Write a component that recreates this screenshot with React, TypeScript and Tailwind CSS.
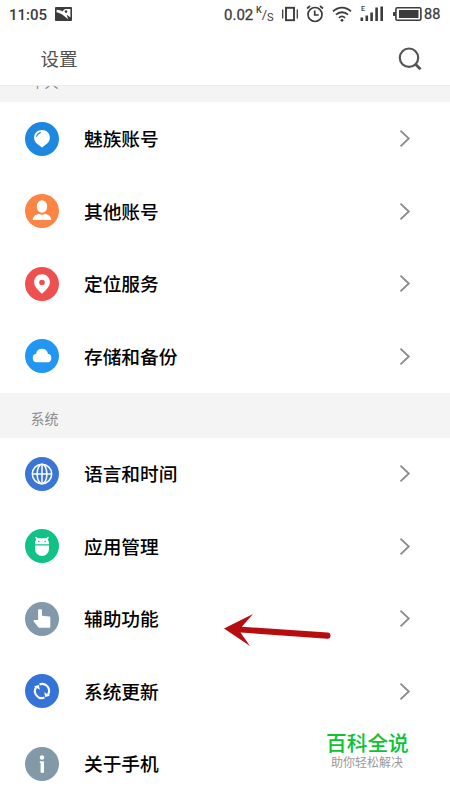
import React from 'react';

interface SettingItem {
  label: string;
  color: string;
  icon: React.ReactNode;
}

const accountItems: SettingItem[] = [
  {
    label: '魅族账号',
    color: 'bg-[#1e88e0]',
    icon: (
      <>
        <path d="M17 8c4.6 0 7.9 3.3 7.9 7.6 0 4-2.7 6.4-5.3 7.9L17 25.5l-2.6-2C11.8 22 9.1 19.6 9.1 15.6 9.1 11.3 12.4 8 17 8z" fill="#fff" />
        <path d="M11.5 14.3c.6-2 1.9-3.200 3.900-3.700" fill="none" stroke="#1e88e0" strokeWidth="1.1" strokeLinecap="round" />
      </>
    ),
  },
  {
    label: '其他账号',
    color: 'bg-[#fb8544]',
    icon: (
      <>
        <ellipse cx="17" cy="12.5" rx="5.2" ry="6.2" fill="#fff" />
        <path d="M7.8 26c0-3.600 2.200-4.900 6.200-6.200 1.800 1.200 4.200 1.200 6 0 4 1.300 6.200 2.600 6.200 6.200z" fill="#fff" />
      </>
    ),
  },
  {
    label: '定位服务',
    color: 'bg-[#ee5050]',
    icon: (
      <path
        fillRule="evenodd"
        d="M17 7.2c4.5 0 7.9 3.4 7.9 7.8 0 4.8-4.4 8.5-7.9 11.7C13.5 23.5 9.1 19.8 9.1 15c0-4.4 3.4-7.8 7.9-7.8zm0 5.5a2.8 2.8 0 1 0 0 5.6 2.8 2.8 0 0 0 0-5.6z"
        fill="#fff"
      />
    ),
  },
  {
    label: '存储和备份',
    color: 'bg-[#2196f3]',
    icon: (
      <path d="M12 23.3a4.3 4.3 0 0 1-.9-8.5 6 6 0 0 1 11.8-.1 4.350 4.350 0 0 1-.9 8.600z" fill="#fff" />
    ),
  },
];

const systemItems: SettingItem[] = [
  {
    label: '语言和时间',
    color: 'bg-[#3b76d6]',
    icon: (
      <g fill="none" stroke="#fff" strokeWidth="1.5">
        <circle cx="17" cy="17" r="9.7" />
        <ellipse cx="17" cy="17" rx="4.9" ry="9.7" />
        <path d="M7.3 17h19.4M17 7.3v19.4" />
      </g>
    ),
  },
  {
    label: '应用管理',
    color: 'bg-[#10c285]',
    icon: (
      <>
        <path d="M10 15.2c0-2.1.5-3.6 1.3-4.7L10 8.2l1-.5 2 1.500h8l2-1.500 1 .5-1.300 2.300c.8 1.100 1.300 2.600 1.300 4.700z" fill="#fff" />
        <path d="M10 16.5h14v3.600a7 7 0 0 1-14 0z" fill="#fff" />
        <circle cx="13.8" cy="12.5" r="0.8" fill="#10c285" />
        <circle cx="20.2" cy="12.5" r="0.8" fill="#10c285" />
      </>
    ),
  },
  {
    label: '辅助功能',
    color: 'bg-[#8299ab]',
    icon: (
      <path d="M13.1 8.2c0-.6.4-1 1-1h1.900c.6 0 1 .4 1 1v5.600l7.500.7c.5.1.8.4.8.9v9.400c0 .6-.4 1-1 1H14.800c-.6 0-1-.2-1.400-.6l-4.700-5.800c-.3-.5-.1-1.200.5-1.300l3.900-.1z" fill="#fff" />
    ),
  },
  {
    label: '系统更新',
    color: 'bg-[#3474d9]',
    icon: (
      <>
        <path d="M14.5 10.4a7 7 0 0 1 8.500 10.200M19.500 23.600a7 7 0 0 1-8.500-10.200" fill="none" stroke="#fff" strokeWidth="2.1" />
        <path d="M9 12.200 13.800 11l1 4.800zM25 21.800 20.200 23l-1-4.800z" fill="#fff" />
      </>
    ),
  },
  {
    label: '关于手机',
    color: 'bg-[#8299a8]',
    icon: (
      <>
        <circle cx="17" cy="10.5" r="2.2" fill="#fff" />
        <path d="M14.8 14.300h4.200v11.400h-3.400v-9.600h-.8z" fill="#fff" />
      </>
    ),
  },
];

const StatusBar: React.FC = () => (
  <div className="flex h-7 items-center pl-[9px] font-['Roboto',sans-serif] text-[15px] font-medium leading-7 text-[#3c3c3c]">
    <span className="w-[46px] pt-px">11:05</span>
    <svg className="h-[14px] w-[17px]" viewBox="0 0 17 14">
      <rect width="17" height="14" rx="1" fill="#3c3c3c" />
      <path d="M1.600 2.800C4 3 6 3.400 7.600 4.500 8.500 2.600 10 2 11.500 2H15.400V10.500L11.500 7.500 13.200 12.300 8.500 8.500C6.500 6.500 4 6 1.600 5.200z" fill="#fff" />
      <circle cx="11" cy="4.600" r="1.300" fill="#3c3c3c" />
    </svg>
    <span className="ml-[152px] w-[32px] pt-px text-[15px] font-normal [-webkit-text-stroke:0.3px_#3c3c3c]">0.02</span>
    <span className="flex w-[17px] items-center leading-none">
      <span className="-mt-2 text-[9px]">K</span>
      <span className="text-[13px] font-normal">/</span>
      <span className="mt-1.5 text-[11px] font-normal">S</span>
    </span>
    <svg className="ml-[9px] h-[16px] w-[16px]" viewBox="0 0 16 16" fill="none" stroke="#3c3c3c">
      <rect x="4" y="1.8" width="8" height="12.4" strokeWidth="1.9" />
      <path d="M.7 3.500v9M15.300 3.500v9" strokeWidth="1.3" />
    </svg>
    <svg className="ml-[8px] h-[18px] w-[18px]" viewBox="0 0 18 18" fill="none" stroke="#3c3c3c" strokeWidth="1.7">
      <circle cx="9" cy="9.5" r="7" />
      <path d="M8.700 5.500v4.500h4" />
      <path d="M1 3.500 4 1M17 3.500 14 1" />
    </svg>
    <svg className="ml-[8px] h-[16px] w-[20px]" viewBox="0 0 20 16" fill="none" stroke="#3c3c3c" strokeWidth="1.8">
      <path d="M1 5.300c5.300-5 12.700-5 18 0M4 8.700c3.500-3.300 8.500-3.300 12 0M6.900 11.800c1.900-1.700 4.300-1.700 6.200 0" />
      <circle cx="10" cy="14.3" r="1.4" fill="#3c3c3c" stroke="none" />
    </svg>
    <div className="ml-[8px] flex h-[16px] w-[24px] flex-col">
      <span className="h-[7px] pl-px text-[7px] leading-[7px]">E</span>
      <svg className="-mt-[7px] h-[15px] w-[24px]" viewBox="0 0 24 15" fill="#3c3c3c">
        <path d="M.5 11.500h2.600v3.500H.5zM5.500 9.500h2.600v5.500H5.500zM10.300 6.500h2.600v8.500h-2.600zM15.300 1.500h2.600V15h-2.600zM20.400.5H23V15h-2.600z" />
      </svg>
    </div>
    <svg className="ml-[9px] h-[14px] w-[29px]" viewBox="0 0 29 14">
      <rect x="2.9" y=".8" width="25" height="12.4" rx="1.5" fill="none" stroke="#3c3c3c" strokeWidth="1.6" />
      <rect x="6" y="3" width="19.5" height="8" fill="#3c3c3c" />
      <rect x="0" y="5" width="2.5" height="4" rx=".7" fill="#3c3c3c" />
    </svg>
    <span className="ml-[2px] pt-px text-[14.5px] font-normal [-webkit-text-stroke:0.3px_#3c3c3c]">88</span>
  </div>
);

const Header: React.FC = () => (
  <div className="flex h-[57px] items-center justify-between pl-[40.5px] pr-[28px] pt-[4px]">
    <h1 className="text-[18.5px] leading-none text-[#505050]">设置</h1>
    <svg className="h-6 w-6" viewBox="0 0 24 24" fill="none" stroke="#555" strokeWidth="2.2">
      <circle cx="11" cy="10.7" r="9.2" />
      <path d="m17.500 17.300 5 5" strokeWidth="2.8" />
    </svg>
  </div>
);

const SectionTitle: React.FC<{ title: string }> = ({ title }) => (
  <div className="flex h-[45px] items-center bg-[#f4f4f4] pl-[30.5px] pt-[5px] text-[14px] leading-none text-[#8c8c8c]">
    {title}
  </div>
);

const SettingRow: React.FC<{ item: SettingItem }> = ({ item }) => (
  <div className="flex h-[72.5px] items-center pl-[25px] pr-[39px]">
    <div className={`h-[34px] w-[34px] shrink-0 rounded-full ${item.color}`}>
      <svg className="h-[34px] w-[34px]" viewBox="0 0 34 34">
        {item.icon}
      </svg>
    </div>
    <span className="ml-[25px] flex-1 text-[18.7px] font-medium leading-none text-black">{item.label}</span>
    <svg className="h-[17px] w-[12px]" viewBox="0 0 12 17" fill="none" stroke="#8a8a8a" strokeWidth="1.8">
      <path d="m1.500 .7 8.300 7.800-8.300 7.800" />
    </svg>
  </div>
);

const App: React.FC = () => {
  return (
    <div className="relative flex h-[800px] w-[450px] flex-col overflow-hidden bg-white font-['Noto_Sans_CJK_SC',sans-serif]">
      <StatusBar />
      <Header />
      {/* list is scrolled, so the first section title is partly hidden */}
      <div className="flex-1 overflow-hidden border-t border-[#ececec]">
        <div className="-mt-[29px]">
          <SectionTitle title="个人" />
          <div className="h-[291px] pt-[0.5px]">
            {accountItems.map((item) => (
              <SettingRow key={item.label} item={item} />
            ))}
          </div>
          <SectionTitle title="系统" />
          <div className="-mt-[0.5px]">
            {systemItems.map((item) => (
              <SettingRow key={item.label} item={item} />
            ))}
          </div>
        </div>
      </div>

      <svg className="absolute left-[222px] top-[612px] h-[36px] w-[110px]" viewBox="0 0 110 36">
        <path d="M2 16.500 31 2 19.800 14.700 105.500 20.600a3 3 0 0 1-.2 6.200L18.500 20.400 28 34z" fill="#b80d10" />
      </svg>

      <div className="absolute left-[318px] top-[723px] h-[53px] w-[110px] bg-white pl-[8px] pt-[8px] leading-none">
        <div className="text-[20.7px] font-medium leading-[22px] text-[#0cc332]">百科全说</div>
        <div className="pl-[5px] pt-[2px] text-[12px] leading-[14px] text-[#999]">助你轻松解决</div>
      </div>
    </div>
  );
};

export default App;
